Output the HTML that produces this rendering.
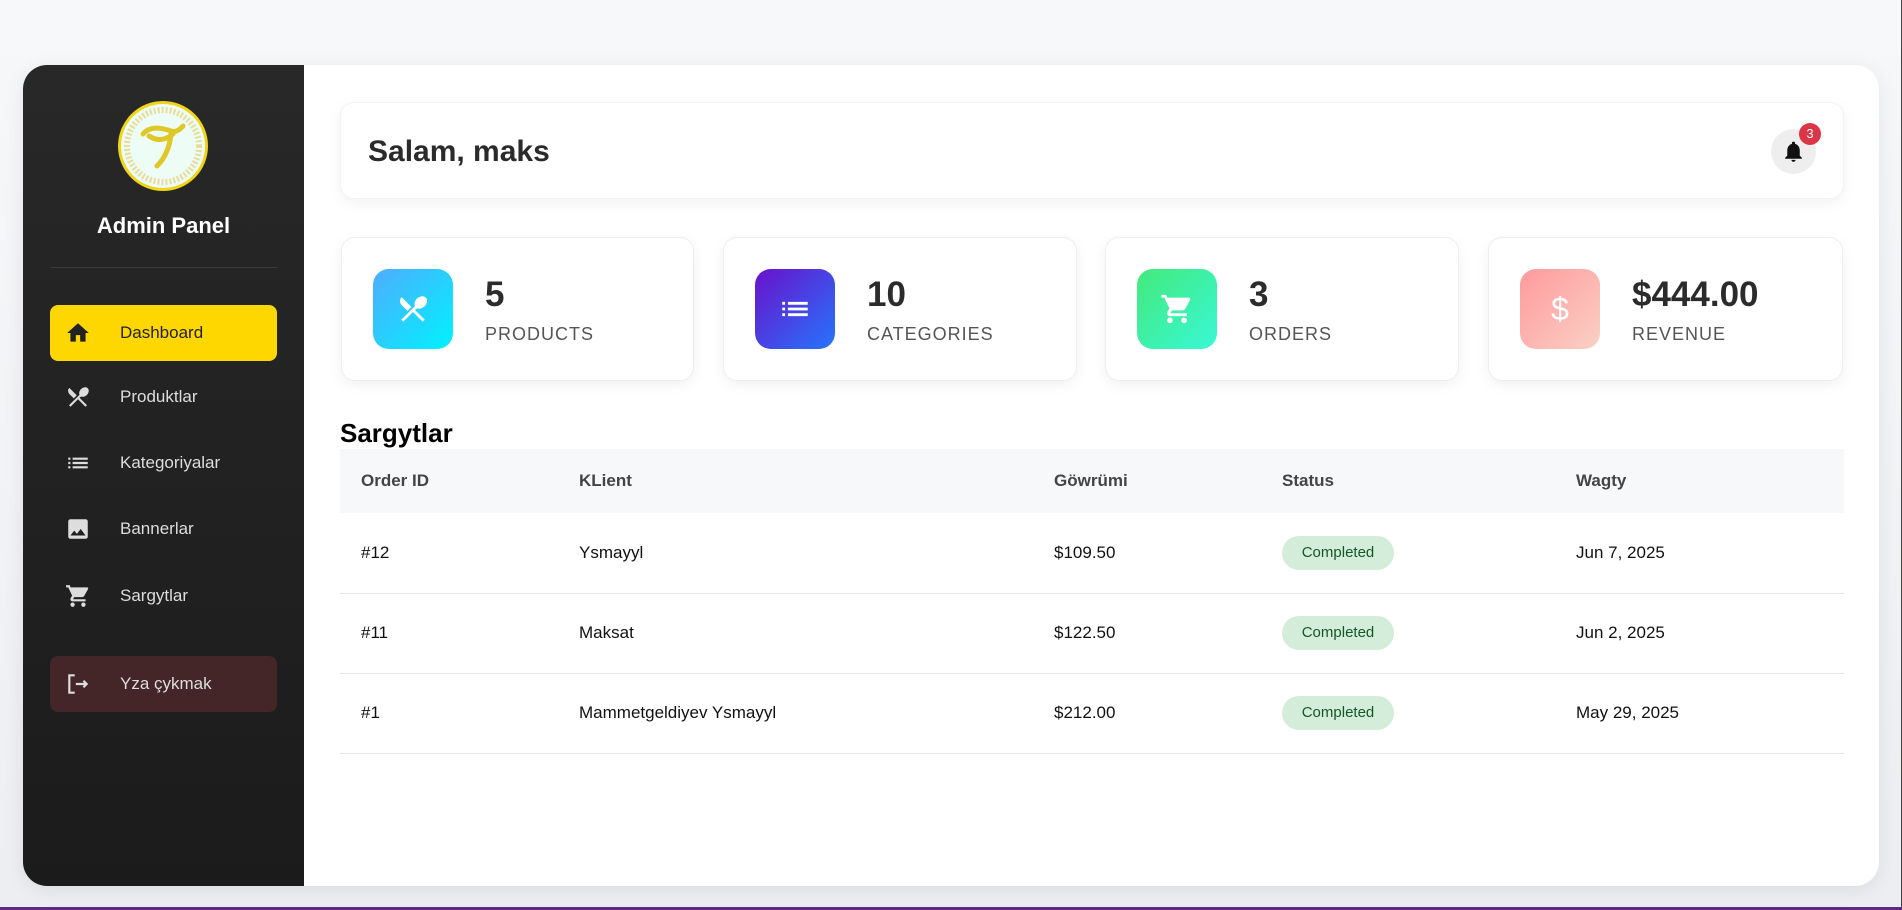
<!DOCTYPE html>
<html><head><meta charset="utf-8"><style>
*{box-sizing:border-box;margin:0;padding:0}
body{width:1902px;height:910px;overflow:hidden;background:linear-gradient(#f7f8fa,#eceef1);font-family:"Liberation Sans",Arial,sans-serif;position:relative}
.bar{position:absolute;left:0;bottom:0;width:1902px;height:3px;background:#5e2a84}
.wrap{position:absolute;left:23px;top:65px;width:1856px;height:821px;background:#fff;border-radius:24px;overflow:hidden;box-shadow:0 4px 20px rgba(0,0,0,.08)}
.side{position:absolute;left:0;top:0;width:281px;height:100%;background:linear-gradient(#282828,#1b1b1b)}
.logo{position:absolute;left:95px;top:36px;width:90px;height:90px;border-radius:50%;background:#eefcf6;border:3px solid #f0d417}
.title{position:absolute;left:0;width:281px;top:148px;text-align:center;color:#fff;font-weight:bold;font-size:22px}
.div{position:absolute;left:27px;width:227px;top:202px;height:1px;background:#3a3a3a}
.item{position:absolute;left:27px;width:227px;height:56px;border-radius:8px;color:#ddd;font-size:17px}
.item span{position:absolute;left:70px;top:18px}
.item svg{position:absolute;left:15px;top:15px;width:26px;height:26px}
.card{position:absolute;background:#fff;border-radius:14px;border:1px solid #eee;box-shadow:0 4px 14px rgba(0,0,0,.06)}
.ib{position:absolute;left:31px;top:31px;width:80px;height:80px;border-radius:16px}
.ib svg{position:absolute;left:23px;top:23px;width:34px;height:34px}
.num{position:absolute;left:143px;top:37px;font-size:35px;font-weight:bold;color:#2b2b2b}
.lbl{position:absolute;left:143px;top:86px;font-size:18px;color:#555;letter-spacing:1px}
table{position:absolute;left:340px;top:449px;width:1504px;border-collapse:collapse;font-size:17px}
th{background:#f7f8fa;height:64px;text-align:left;color:#444;font-weight:bold;padding-left:21px}
td{height:80px;border-bottom:1px solid #e8e8e8;padding-left:21px;color:#111}
.st{display:inline-block;width:112px;height:34px;line-height:34px;text-align:center;border-radius:17px;background:#d4edda;color:#155724;font-size:15px}
</style></head><body>
<div class="wrap">
<div class="side">
<div class="logo"><svg width="84" height="84" viewBox="0 0 84 84"><circle cx="42" cy="42" r="36" fill="none" stroke="#e8dc9a" stroke-width="6" stroke-dasharray="2 2"/><path d="M22 30 Q30 20 50 27 Q56 29 62 22 M28 32 Q40 40 52 30 M50 30 Q48 50 36 62" fill="none" stroke="#e0c728" stroke-width="5" stroke-linecap="round"/></svg></div>
<div class="title">Admin Panel</div>
<div class="div"></div>
<div class="item" style="top:240px;background:#ffd700;color:#222"><svg viewBox="0 0 24 24"><path d="M10 20v-6h4v6h5v-8h3L12 3 2 12h3v8z" fill="#222"/></svg><span>Dashboard</span></div>
<div class="item" style="top:304px"><svg viewBox="0 0 24 24"><path d="M8.1 13.3l2.8-2.8L4 3.6a4 4 0 000 5.6zm6.8-1.8c1.5.7 3.700.2 5.3-1.4 1.9-1.9 2.3-4.7.8-6.2s-4.2-1.1-6.2.8c-1.6 1.6-2.1 3.8-1.4 5.3L3.7 19.6l1.4 1.4L12 14.1l6.9 6.9 1.4-1.4L13.4 12.7z" fill="#ddd"/></svg><span>Produktlar</span></div>
<div class="item" style="top:370px"><svg viewBox="0 0 24 24"><path d="M3 13h2v-2H3zm0 4h2v-2H3zm0-8h2V7H3zm4 4h14v-2H7zm0 4h14v-2H7zM7 7v2h14V7z" fill="#ddd"/></svg><span>Kategoriyalar</span></div>
<div class="item" style="top:436px"><svg viewBox="0 0 24 24"><path d="M21 19V5a2 2 0 00-2-2H5a2 2 0 00-2 2v14a2 2 0 002 2h14a2 2 0 002-2zM8.5 13.5l2.5 3 3.5-4.5 4.5 6H5z" fill="#ddd"/></svg><span>Bannerlar</span></div>
<div class="item" style="top:503px"><svg viewBox="0 0 24 24"><path d="M7 18a2 2 0 100 4 2 2 0 000-4zM1 2v2h2l3.6 7.6-1.4 2.4A2 2 0 007 17h12v-2H7.4l1.1-2h7.5a2 2 0 001.7-1l3.6-6.5A1 1 0 0020.4 4H5.2l-.9-2zm16 16a2 2 0 100 4 2 2 0 000-4z" fill="#ddd"/></svg><span>Sargytlar</span></div>
<div class="item" style="top:591px;background:#442528"><svg viewBox="0 0 24 24"><path d="M9 4H4v16h5M10 12h10m-3-3l3 3-3 3" fill="none" stroke="#ddd" stroke-width="2"/></svg><span>Yza çykmak</span></div>
</div>
</div>
<div class="card" style="left:340px;top:102px;width:1504px;height:97px;border-color:#f3f3f3">
<div style="position:absolute;left:27px;top:32px;font-size:30px;font-weight:bold;color:#2b2b2b">Salam, maks</div>
<div style="position:absolute;left:1430px;top:26px;width:45px;height:45px;border-radius:50%;background:#eee"><svg viewBox="0 0 24 24" style="position:absolute;left:10px;top:10px;width:25px;height:25px"><path d="M12 22a2 2 0 002-2h-4a2 2 0 002 2zm6-6v-5c0-3-1.6-5.6-4.5-6.3V4a1.5 1.5 0 00-3 0v.7C7.6 5.4 6 8 6 11v5l-2 2v1h16v-1z" fill="#111"/></svg></div>
<div style="position:absolute;left:1458px;top:20px;width:22px;height:22px;border-radius:50%;background:#dc3545;color:#fff;font-size:13px;text-align:center;line-height:22px">3</div>
</div>
<div class="card" style="left:341px;top:237px;width:353px;height:144px"><div class="ib" style="background:linear-gradient(135deg,#4facfe,#00f2fe)"><svg viewBox="0 0 24 24"><path d="M8.1 13.3l2.8-2.8L4 3.6a4 4 0 000 5.6zm6.8-1.8c1.5.7 3.7.2 5.3-1.4 1.9-1.9 2.3-4.7.8-6.2s-4.2-1.1-6.2.8c-1.6 1.6-2.1 3.8-1.4 5.3L3.7 19.6l1.4 1.4L12 14.1l6.9 6.9 1.4-1.4L13.4 12.7z" fill="#fff"/></svg></div><div class="num">5</div><div class="lbl">PRODUCTS</div></div>
<div class="card" style="left:723px;top:237px;width:354px;height:144px"><div class="ib" style="background:linear-gradient(135deg,#6a11cb,#2575fc)"><svg viewBox="0 0 24 24"><path d="M3 13h2v-2H3zm0 4h2v-2H3zm0-8h2V7H3zm4 4h14v-2H7zm0 4h14v-2H7zM7 7v2h14V7z" fill="#fff"/></svg></div><div class="num">10</div><div class="lbl">CATEGORIES</div></div>
<div class="card" style="left:1105px;top:237px;width:354px;height:144px"><div class="ib" style="background:linear-gradient(135deg,#43e97b,#38f9d7)"><svg viewBox="0 0 24 24"><path d="M7 18a2 2 0 100 4 2 2 0 000-4zM1 2v2h2l3.6 7.6-1.4 2.4A2 2 0 007 17h12v-2H7.4l1.1-2h7.5a2 2 0 001.7-1l3.6-6.5A1 1 0 0020.4 4H5.2l-.9-2zm16 16a2 2 0 100 4 2 2 0 000-4z" fill="#fff"/></svg></div><div class="num">3</div><div class="lbl">ORDERS</div></div>
<div class="card" style="left:1488px;top:237px;width:355px;height:144px"><div class="ib" style="background:linear-gradient(135deg,#ff9a9e,#fad0c4)"><div style="position:absolute;width:80px;top:22px;text-align:center;color:#fff;font-size:32px">$</div></div><div class="num">$444.00</div><div class="lbl">REVENUE</div></div>
<div style="position:absolute;left:340px;top:418px;font-size:26px;font-weight:bold;color:#000">Sargytlar</div>
<table>
<tr><th style="width:218px">Order ID</th><th style="width:475px">KLient</th><th style="width:228px">Göwrümi</th><th style="width:294px">Status</th><th>Wagty</th></tr>
<tr><td>#12</td><td>Ysmayyl</td><td>$109.50</td><td><span class="st">Completed</span></td><td>Jun 7, 2025</td></tr>
<tr><td>#11</td><td>Maksat</td><td>$122.50</td><td><span class="st">Completed</span></td><td>Jun 2, 2025</td></tr>
<tr><td>#1</td><td>Mammetgeldiyev Ysmayyl</td><td>$212.00</td><td><span class="st">Completed</span></td><td>May 29, 2025</td></tr>
</table>
<div style="position:absolute;right:0;top:0;width:1px;height:910px;background:#444"></div>
<div class="bar"></div>
</body></html>
